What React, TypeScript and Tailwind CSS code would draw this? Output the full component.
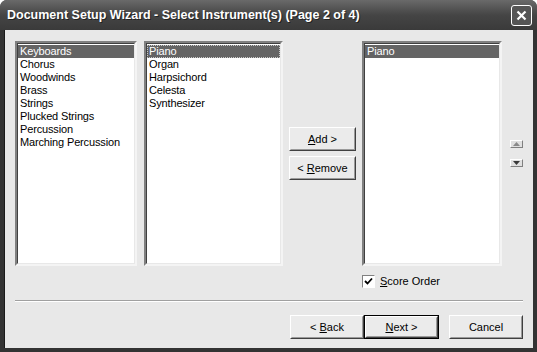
import { useState } from "react";

const families = ["Keyboards", "Chorus", "Woodwinds", "Brass", "Strings", "Plucked Strings", "Percussion", "Marching Percussion"];
const instruments = ["Piano", "Organ", "Harpsichord", "Celesta", "Synthesizer"];

function ListBox({ items, selected, focus, className }: { items: string[]; selected: number; focus?: boolean; className: string }) {
  return (
    <div className={`bg-white border-2 border-t-[#808080] border-l-[#808080] border-r-[#f4f4f4] border-b-[#f4f4f4] ${className}`}>
      <div className="h-full border border-t-[#404040] border-l-[#404040] border-r-[#e8e8e8] border-b-[#e8e8e8] pt-px">
        {items.map((it, i) => (
          <div
            key={it}
            className={`h-[13px] leading-[13px] pl-[2px] whitespace-nowrap tracking-[-0.15px] ${i === selected ? "bg-[#646464] text-white" : "text-black"} ${i === selected && focus ? "outline-1 outline-dotted outline-[#c8c8c8] -outline-offset-1" : ""}`}
          >
            {it}
          </div>
        ))}
      </div>
    </div>
  );
}

function Btn({ children, def, className }: { children: React.ReactNode; def?: boolean; className: string }) {
  return (
    <div className={`${def ? "border border-black" : ""} ${className}`}>
      <div className="h-full border border-t-white border-l-white border-r-[#404040] border-b-[#404040] bg-[#ebebeb]">
        <div className="h-full border border-transparent border-r-[#9a9a9a] border-b-[#9a9a9a] flex items-center justify-center text-black">
          {children}
        </div>
      </div>
    </div>
  );
}

function SmallArrow({ up }: { up?: boolean }) {
  return (
    <div className="w-[13px] h-[8px] bg-[#e0e0e0] border border-t-white border-l-white border-r-[#808080] border-b-[#808080] flex items-center justify-center">
      <svg width="7" height="4" viewBox="0 0 7 4">
        {up ? <polygon points="3.5,0 7,4 0,4" fill="#8a8a8a" /> : <polygon points="0,0 7,0 3.5,4" fill="#3a3a3a" />}
      </svg>
    </div>
  );
}

export default function App() {
  const [scoreOrder, setScoreOrder] = useState(true);

  return (
    <div
      className="w-[537px] h-[352px] bg-[#333333] rounded-t-[7px] flex flex-col overflow-hidden text-[11px]"
      style={{ fontFamily: '"Liberation Sans", Arial, sans-serif' }}
    >
      {/* title bar */}
      <div className="h-[30px] shrink-0 bg-gradient-to-b from-[#6a6a6a] via-[#454545] to-[#3a3a3a] flex items-center pl-[7px] pr-[5px]">
        <div className="flex-1 text-white font-bold text-[12.5px] pt-[1px] [text-shadow:1px_1px_0_#222]">
          Document Setup Wizard - Select Instrument(s) (Page 2 of 4)
        </div>
        <div className="w-[21px] h-[21px] rounded-[3px] border border-white bg-[#555] flex items-center justify-center mt-[1px]">
          <svg width="11" height="11" viewBox="0 0 11 11">
            <path d="M1.5 1.5 L9.5 9.5 M9.5 1.5 L1.5 9.5" stroke="white" strokeWidth="2.2" />
          </svg>
        </div>
      </div>

      {/* client */}
      <div className="flex-1 mx-[4px] mb-[4px] bg-[#e8e8e8] border-l border-[#1a1a1a] pt-[11px] pl-[10px] pr-[10px] flex flex-col">
        <div className="flex items-start">
          <ListBox items={families} selected={0} className="w-[122px] h-[225px]" />
          <ListBox items={instruments} selected={0} focus className="w-[139px] h-[225px] ml-[7px]" />

          <div className="w-[67px] h-[225px] ml-[6px] flex flex-col justify-center gap-[5px]">
            <Btn className="h-[24px]">
              <span>
                <u>A</u>dd &gt;
              </span>
            </Btn>
            <Btn className="h-[24px]">
              <span>
                &lt; <u>R</u>emove
              </span>
            </Btn>
          </div>

          <div className="ml-[6px] flex flex-col">
            <ListBox items={["Piano"]} selected={0} className="w-[140px] h-[225px]" />
            <label className="flex items-center mt-[9px] h-[13px]">
              <span
                className="w-[13px] h-[13px] bg-white border border-t-[#808080] border-l-[#808080] border-r-white border-b-white flex items-center justify-center"
                onClick={() => setScoreOrder(!scoreOrder)}
              >
                {scoreOrder && (
                  <svg width="9" height="9" viewBox="0 0 9 9">
                    <path d="M1 4 L3.5 6.5 L8 1.5" stroke="black" strokeWidth="1.8" fill="none" />
                  </svg>
                )}
              </span>
              <span className="ml-[5px] text-black">
                <u>S</u>core Order
              </span>
            </label>
          </div>

          <div className="ml-[8px] h-[225px] flex flex-col justify-center gap-[11px]">
            <SmallArrow up />
            <SmallArrow />
          </div>
        </div>

        {/* separator */}
        <div className="mt-[12px] h-[2px] border-t border-[#a0a0a0] border-b border-b-white" />

        <div className="flex justify-end mt-[13px]">
          <Btn className="w-[74px] h-[24px]">
            <span>
              &lt; <u>B</u>ack
            </span>
          </Btn>
          <Btn def className="w-[75px] h-[24px]">
            <span>
              <u>N</u>ext &gt;
            </span>
          </Btn>
          <Btn className="w-[74px] h-[24px] ml-[10px]">
            <span>Cancel</span>
          </Btn>
        </div>
      </div>
    </div>
  );
}
